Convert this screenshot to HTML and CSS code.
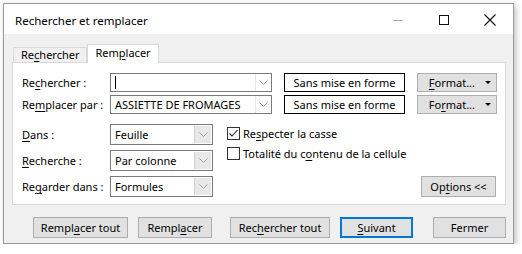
FILE: index.html
```html
<!DOCTYPE html>
<html lang="fr">
<head>
<meta charset="utf-8">
<link rel="stylesheet" href="styles.css">
</head>
<body>
<div class="window">
  <div class="titlebar">
    <span class="title">Rechercher et remplacer</span>
    <div class="controls">
      <svg class="ctl" width="46" height="30" viewBox="0 0 46 30"><line x1="18" y1="16.5" x2="28" y2="16.5" stroke="#aaa" stroke-width="1"/></svg>
      <svg class="ctl" width="46" height="30" viewBox="0 0 46 30"><rect x="18.5" y="11.5" width="9" height="9" fill="none" stroke="#111" stroke-width="1"/></svg>
      <svg class="ctl" width="46" height="30" viewBox="0 0 46 30"><path d="M17.5 10.5 L28.5 21.5 M28.5 10.5 L17.5 21.5" stroke="#111" stroke-width="1.1"/></svg>
    </div>
  </div>
  <div class="client">
    <div class="tabs">
      <div class="tab">Re<u>c</u>hercher</div>
      <div class="tab active">Rem<u>p</u>lacer</div>
    </div>
    <div class="panel">
      <div class="fields">
        <label class="lbl">Re<u>c</u>hercher :</label>
        <div class="combo"><span class="val"><span class="caret"></span></span><span class="arrow"><svg width="9" height="6" viewBox="0 0 9 6"><path d="M0.5 0.5 L4.5 4.5 L8.5 0.5" fill="none" stroke="#a0a0a0"/></svg></span></div>
        <div class="fmtbox">Sans mise en forme</div>
        <div class="btn fmt"><span><u>F</u>ormat...</span><span class="tri"></span></div>

        <label class="lbl">Re<u>m</u>placer par :</label>
        <div class="combo"><span class="val">ASSIETTE DE FROMAGES</span><span class="arrow"><svg width="9" height="6" viewBox="0 0 9 6"><path d="M0.5 0.5 L4.5 4.5 L8.5 0.5" fill="none" stroke="#a0a0a0"/></svg></span></div>
        <div class="fmtbox">Sans mise en forme</div>
        <div class="btn fmt"><span>Fo<u>r</u>mat...</span><span class="tri"></span></div>
      </div>
      <div class="options">
        <div class="selects">
          <label class="lbl"><u>D</u>ans :</label>
          <div class="select"><span class="val">Feuille</span><span class="sarrow"><svg width="9" height="6" viewBox="0 0 9 6"><path d="M0.5 0.5 L4.5 4.5 L8.5 0.5" fill="none" stroke="#a0a0a0"/></svg></span></div>
          <label class="lbl"><u>R</u>echerche :</label>
          <div class="select"><span class="val">Par colonne</span><span class="sarrow"><svg width="9" height="6" viewBox="0 0 9 6"><path d="M0.5 0.5 L4.5 4.5 L8.5 0.5" fill="none" stroke="#a0a0a0"/></svg></span></div>
          <label class="lbl">Re<u>g</u>arder dans :</label>
          <div class="select"><span class="val">Formules</span><span class="sarrow"><svg width="9" height="6" viewBox="0 0 9 6"><path d="M0.5 0.5 L4.5 4.5 L8.5 0.5" fill="none" stroke="#a0a0a0"/></svg></span></div>
        </div>
        <div class="checks">
          <div class="check"><span class="box"><svg width="11" height="11" viewBox="0 0 11 11"><path d="M1.5 5.5 L4 8 L9.5 2" fill="none" stroke="#222" stroke-width="1.1"/></svg></span>Re<u>s</u>pecter la casse</div>
          <div class="check"><span class="box"></span>Totalité du c<u>o</u>ntenu de la cellule</div>
        </div>
        <div class="optwrap"><div class="btn opt">Op<u>t</u>ions &lt;&lt;</div></div>
      </div>
    </div>
    <div class="buttons">
      <div class="btn b1">Rempl<u>a</u>cer tout</div>
      <div class="btn b2">Rempl<u>a</u>cer</div>
      <div class="btn b3">Rec<u>h</u>ercher tout</div>
      <div class="btn b4 default"><u>S</u>uivant</div>
      <div class="btn b5">Fermer</div>
    </div>
  </div>
</div>
</body>
</html>
```

FILE: styles.css
```css
* { box-sizing: border-box; }
html, body { margin: 0; padding: 0; background: #ffffff; }
body {
  font-family: "Noto Sans", "Open Sans", sans-serif;
  font-size: 11px;
  color: #000;
}
u { text-decoration: underline; text-underline-offset: 2px; }
.window {
  margin: 3px 0 0 3px;
  width: 511px;
  height: 241px;
  border: 1px solid #9a9a9a;
  background: #f0f0f0;
  box-shadow: 2px 2px 6px rgba(0,0,0,0.25);
  display: flex;
  flex-direction: column;
}
.titlebar {
  height: 30px;
  background: #fff;
  display: flex;
  align-items: center;
  justify-content: space-between;
  padding-left: 11px;
}
.title { font-size: 11.5px; color: #000; padding-top: 2px; }
.controls { display: flex; align-self: flex-start; }
.ctl { display: block; }
.client {
  flex: 1;
  padding: 10px 6px 0 8px;
  display: flex;
  flex-direction: column;
}
.tabs { display: flex; align-items: flex-end; height: 18px; padding-left: 1px; }
.tab {
  height: 15px;
  padding: 0 7px;
  line-height: 14px;
  border: 1px solid #d9d9d9;
  border-bottom: none;
  background: #f0f0f0;
}
.tab.active {
  height: 19px;
  margin-bottom: -1px;
  background: #fff;
  padding: 0 7px;
  line-height: 16px;
  position: relative;
  z-index: 1;
}
.panel {
  height: 143px;
  width: 494px;
  background: #fff;
  border: 1px solid #d9d9d9;
  padding: 10px 0 0 9px;
}
.fields {
  display: grid;
  grid-template-columns: 76px 162px 121px 80px;
  column-gap: 12px;
  row-gap: 3px;
  grid-auto-rows: 19px;
}
.lbl { display: flex; align-items: center; white-space: nowrap; }
.combo {
  display: flex;
  border: 1px solid #7a7a7a;
  background: #fff;
}
.combo .val { flex: 1; padding-left: 4px; display: flex; align-items: center; }
.caret { width: 1px; height: 13px; background: #000; }
.arrow {
  width: 16px;
  border-left: 1px solid #e6e6e6;
  display: flex; align-items: center; justify-content: center;
  background: #fff;
}
.fmtbox {
  border: 1px solid #000;
  display: flex; align-items: center; justify-content: center;
  background: #fff;
}
.btn {
  background: #e1e1e1;
  border: 1px solid #adadad;
  display: flex; align-items: center; justify-content: center;
  white-space: nowrap;
}
.btn.fmt { justify-content: flex-end; padding-right: 5px; gap: 10px; }
.tri {
  width: 0; height: 0;
  border-left: 3px solid transparent;
  border-right: 3px solid transparent;
  border-top: 3px solid #000;
}
.options {
  margin-top: 10px;
  display: flex;
  align-items: flex-start;
  padding-right: 9px;
}
.selects {
  display: grid;
  grid-template-columns: 88px 103px;
  grid-auto-rows: 21px;
  row-gap: 5px;
}
.select {
  display: flex;
  border: 1px solid #7a7a7a;
  background: #fff;
}
.select .val { flex: 1; padding-left: 4px; display: flex; align-items: center; }
.sarrow {
  width: 17px;
  margin: 1px 1px 1px 0;
  background: #e8e8e8;
  border-left: 1px solid #d0d0d0;
  display: flex; align-items: center; justify-content: center;
}
.checks {
  margin-left: 14px;
  margin-top: 2px;
  display: flex;
  flex-direction: column;
  gap: 6px;
}
.check { display: flex; align-items: center; height: 14px; white-space: nowrap; }
.box {
  width: 13px; height: 13px;
  border: 1px solid #333;
  background: #fff;
  margin-right: 3px;
  display: flex; align-items: center; justify-content: center;
}
.optwrap { flex: 1; display: flex; justify-content: flex-end; align-self: stretch; align-items: flex-end; padding-top: 51px; }
.btn.opt { width: 75px; height: 21px; }
.buttons {
  margin-top: 12px;
  display: flex;
  padding-left: 21px;
  height: 21px;
}
.buttons .btn { height: 21px; }
.b1 { width: 95px; }
.b2 { width: 74px; margin-left: 10px; }
.b3 { width: 100px; margin-left: 18px; }
.b4 { width: 73px; margin-left: 10px; }
.b5 { width: 73px; margin-left: 20px; }
.btn.default { border: 2px solid #0078d7; }
```
